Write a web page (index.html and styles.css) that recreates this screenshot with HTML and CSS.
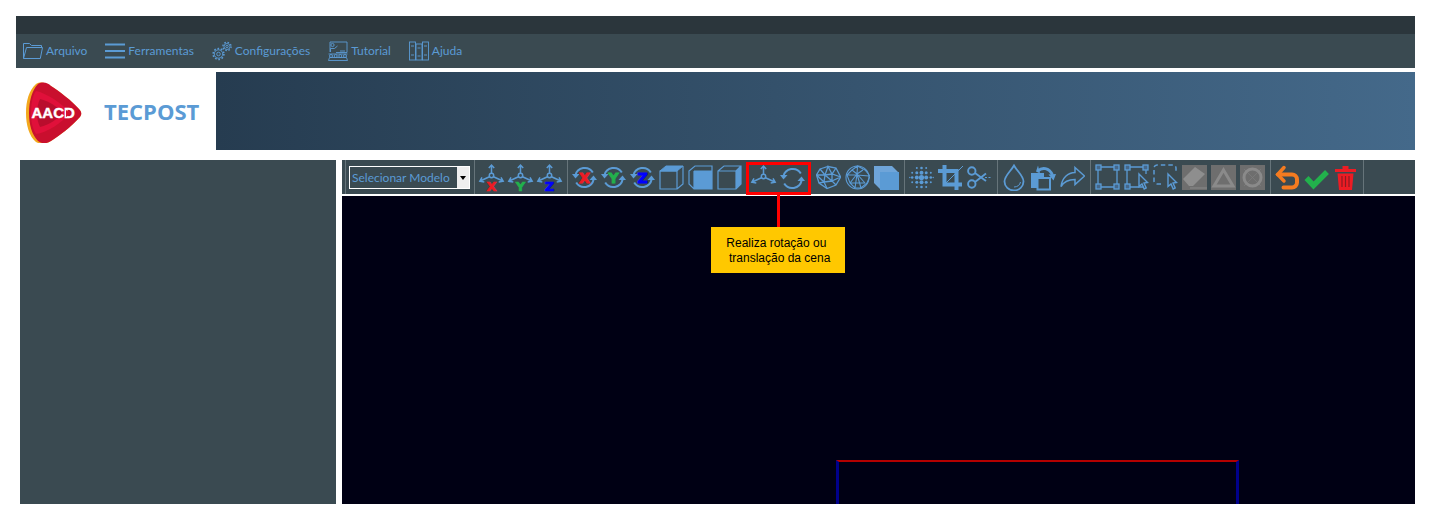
FILE: index.html
```html
<!DOCTYPE html>
<html lang="pt-BR">
<head>
    <meta charset="UTF-8">
    <meta name="viewport" content="width=device-width, initial-scale=1.0">
    <title>TecPost</title>
    <link rel="stylesheet" href="styles.css">
</head>
<body>
    <svg class="sprite" aria-hidden="true">
        <defs>
            <g id="axes" fill="none" stroke="currentColor" stroke-width="1.500">
                <circle cx="12.500" cy="11.500" r="2.200"/>
                <path d="M12.500 9.300V1M9.800 4l2.700-3 2.700 3"/>
                <path d="M10.500 12.700L1.200 17M3 13.300L.8 17.300l4.500.8"/>
                <path d="M14.500 12.700l9.300 4.300M22 13.300l2.200 4-4.500.8"/>
            </g>
            <g id="spin" fill="none" stroke="currentColor" stroke-width="2">
                <path d="M3.400 10.500A9.500 9.500 0 0 1 20.800 7.500"/>
                <path d="M21.600 14.500A9.500 9.500 0 0 1 4.200 17.500"/>
                <path d="M0 9l3.500 4.500L7.500 9z" fill="currentColor" stroke="none"/>
                <path d="M17.500 15l4-4.500 3.500 4.500z" fill="currentColor" stroke="none"/>
            </g>
            <symbol id="i-folder" viewBox="0 0 20 20">
                <path d="M.5 17.500V2.500h6l2 2h10v2M.5 17.500h16.800l2.200-11H3.500l-3 11z" fill="none" stroke="currentColor"/>
            </symbol>
            <symbol id="i-menu" viewBox="0 0 20 20">
                <path d="M0 3.500h20M0 10h20M0 16.500h20" fill="none" stroke="currentColor" stroke-width="2"/>
            </symbol>
            <symbol id="i-gears" viewBox="0 0 20 20">
                <g fill="none" stroke="currentColor">
                    <circle cx="6.500" cy="13" r="1.800" stroke-width=".9"/>
                    <circle cx="6.500" cy="13" r="4.200" stroke-width=".9"/>
                    <circle cx="6.500" cy="13" r="5.400" stroke-width="1.600" stroke-dasharray="1.700 1.690"/>
                    <circle cx="15" cy="5.500" r="1.200" stroke-width=".9"/>
                    <circle cx="15" cy="5.500" r="3" stroke-width=".9"/>
                    <circle cx="15" cy="5.500" r="4.100" stroke-width="1.400" stroke-dasharray="1.600 1.620"/>
                </g>
            </symbol>
            <symbol id="i-class" viewBox="0 0 20 20">
                <g fill="none" stroke="currentColor" stroke-width=".9">
                    <path d="M2 11V1h17v10.500H8"/>
                    <circle cx="4.500" cy="4" r="1.600"/>
                    <path d="M2.500 11V7.500h4l3-2.500M12 10h5"/>
                    <circle cx="3" cy="15" r="1.500"/><circle cx="7.700" cy="15" r="1.500"/>
                    <circle cx="12.300" cy="15" r="1.500"/><circle cx="17" cy="15" r="1.500"/>
                    <path d="M.5 19.500l1-3h17l1 3zM.5 13h19"/>
                </g>
            </symbol>
            <symbol id="i-books" viewBox="0 0 20 20">
                <g fill="none" stroke="currentColor" stroke-width=".9">
                    <rect x=".500" y="1" width="6" height="18"/>
                    <rect x="7" y="3" width="6" height="16"/>
                    <rect x="13.500" y="1" width="6" height="18"/>
                    <path d="M2 5h3M2 14h3M8.500 7h3M8.500 15h3M15 5h3M15 14h3"/>
                </g>
            </symbol>
            <symbol id="i-cube-top" viewBox="0 0 25 27">
                <path d="M1 7l6-5h17l-6 5z" fill="currentColor" stroke="currentColor"/>
                <path d="M1 7h17v18H1zM18 25l6-5V2" fill="none" stroke="currentColor" stroke-width="1.200"/>
            </symbol>
            <symbol id="i-cube-front" viewBox="0 0 25 27">
                <rect x="6" y="7" width="18" height="18" fill="currentColor"/>
                <path d="M1 7l6-5h17v23H6l-5-5zM6 7v18M6 7h18" fill="none" stroke="currentColor" stroke-width="1.200"/>
            </symbol>
            <symbol id="i-cube-side" viewBox="0 0 25 27">
                <path d="M19 7l5-5v18l-5 5z" fill="currentColor"/>
                <path d="M1 7l6-5h17v18l-5 5H1zM1 7h18v18M19 7l5-5" fill="none" stroke="currentColor" stroke-width="1.200"/>
            </symbol>
            <symbol id="i-wire" viewBox="0 0 25 27">
                <g fill="none" stroke="currentColor" stroke-width="1.300">
                    <path d="M4 5l8-2.500L20 4l4.700 9-4.700 8-9 3.500L3 19 .5 11z"/>
                    <path d="M4 5l5 6 3-8.500L16 10l4-6M.5 11L9 11l7-1 8.700 3L16 17l4 4M9 11l-1 7 3 6.500M8 18l8-1M3 19l5-1M.5 11L8 18M9 11l7 6M16 10v7"/>
                </g>
            </symbol>
            <symbol id="i-ball" viewBox="0 0 25 27">
                <g fill="none" stroke="currentColor" stroke-width="1.100">
                    <circle cx="12.500" cy="13.500" r="11.500"/>
                    <path d="M12.500 2L7 6l-5 5 3 8 5 5h6l6-5 3-7-5-6zM7 6l5 4 6-4M12 10l-7 9M12 10l8 9M2 11h10l12 1M5 19h15M10 24l2-14 4 14M12.500 2l-.500 8"/>
                </g>
            </symbol>
            <symbol id="i-solid" viewBox="0 0 25 27">
                <path d="M0 2h18l7 7v17H7l-7-7z" fill="#6fa5d9"/>
                <path d="M6 8h19v18H6z" fill="currentColor"/>
            </symbol>
            <symbol id="i-dots" viewBox="0 0 25 27" fill="currentColor">
                <circle cx="12.500" cy="13.500" r="2.600"/>
                <circle cx="7.800" cy="13.500" r="2"/><circle cx="17.200" cy="13.500" r="2"/>
                <circle cx="12.500" cy="8.800" r="2"/><circle cx="12.500" cy="18.200" r="2"/>
                <circle cx="7.800" cy="8.800" r="1.500"/><circle cx="17.200" cy="8.800" r="1.500"/>
                <circle cx="7.800" cy="18.200" r="1.500"/><circle cx="17.200" cy="18.200" r="1.500"/>
                <circle cx="3.200" cy="13.500" r="1.300"/><circle cx="21.800" cy="13.500" r="1.300"/>
                <circle cx="12.500" cy="4" r="1.300"/><circle cx="12.500" cy="23" r="1.300"/>
                <circle cx="7.800" cy="4" r="1"/><circle cx="17.200" cy="4" r="1"/>
                <circle cx="7.800" cy="23" r="1"/><circle cx="17.200" cy="23" r="1"/>
                <circle cx="3.200" cy="8.800" r="1"/><circle cx="21.800" cy="8.800" r="1"/>
                <circle cx="3.200" cy="18.200" r="1"/><circle cx="21.800" cy="18.200" r="1"/>
                <circle cx=".8" cy="13.500" r=".7"/><circle cx="24.200" cy="13.500" r=".7"/>
            </symbol>
            <symbol id="i-crop" viewBox="0 0 25 27">
                <path d="M6.500 1v19.500H24M0 7h18.500v19" fill="none" stroke="currentColor" stroke-width="4"/>
                <path d="M8 19L25 2" stroke="currentColor" stroke-width="1"/>
            </symbol>
            <symbol id="i-scissors" viewBox="0 0 25 27">
                <g fill="none" stroke="currentColor" stroke-width="1.900">
                    <circle cx="4.800" cy="7" r="3.700"/>
                    <circle cx="4.800" cy="20" r="3.700"/>
                    <path d="M8 9l11 8M8 18l11-8.500"/>
                </g>
                <path d="M18 13.500h7" stroke="currentColor" stroke-width="1" stroke-dasharray="2 1.500"/>
            </symbol>
            <symbol id="i-drop" viewBox="0 0 25 27">
                <path d="M12 1.500c3 5.500 9.500 10.500 9.500 16a9.500 9 0 0 1-19 0C2.500 12 9 7 12 1.500z" fill="none" stroke="currentColor" stroke-width="1.800"/>
                <path d="M12 23c3.500 0 6-2 6.500-5" fill="none" stroke="currentColor"/>
            </symbol>
            <symbol id="i-copy-turn" viewBox="0 0 25 27">
                <rect y="9" width="13" height="15" fill="currentColor"/>
                <rect x="6.500" y="14" width="12.500" height="11.500" fill="#3a4a51" stroke="currentColor" stroke-width="2"/>
                <path d="M7 7C11 3 18 3.500 21.500 11" fill="none" stroke="currentColor" stroke-width="2.800"/>
                <path d="M17.500 10.500l7.500-.5-2.500 6.500zM7 1.500l2 8-4-2z" fill="currentColor"/>
            </symbol>
            <symbol id="i-share" viewBox="0 0 25 27">
                <path d="M15 3.500l9.500 8.500-9.500 8.500v-5c-6 0-11 2-14 7C2 14 8 8.500 15 8.500z" fill="none" stroke="currentColor" stroke-width="1.500"/>
            </symbol>
            <g id="frame" fill="none" stroke="currentColor" stroke-width="1.300">
                <path d="M4 3h17M3 4v18M4 23h17"/>
                <rect x="1" y="1" width="5" height="5" fill="#46688a"/>
                <rect x="19" y="1" width="5" height="5" fill="#46688a"/>
                <rect x="1" y="20" width="5" height="5" fill="#46688a"/>
            </g>
            <path id="cursor" d="M15 10l8.500 8.500-3.500.500 2.200 5-2 1-2.200-5-3 2.500z" fill="#3a4a51" stroke="currentColor" stroke-width="1.400"/>
            <symbol id="i-frame" viewBox="0 0 25 27">
                <path d="M22 4v18" stroke="currentColor" stroke-width="1.300"/>
                <use href="#frame"/>
                <rect x="19" y="20" width="5" height="5" fill="#46688a" stroke="currentColor" stroke-width="1.300"/>
            </symbol>
            <symbol id="i-frame-pick" viewBox="0 0 25 27">
                <path d="M22 4v6" stroke="currentColor" stroke-width="1.300"/>
                <use href="#frame"/>
                <use href="#cursor"/>
            </symbol>
            <symbol id="i-dash-pick" viewBox="0 0 25 27">
                <path d="M8 20H4a3 3 0 0 1-3-3V4a3 3 0 0 1 3-3h16a3 3 0 0 1 3 3v5" fill="none" stroke="currentColor" stroke-width="1.500" stroke-dasharray="4.500 3"/>
                <use href="#cursor"/>
            </symbol>
            <symbol id="i-eraser" viewBox="0 0 25 27">
                <rect y="1" width="25" height="25" fill="#6e6e6e"/>
                <path d="M1 15L13 3l10 7-12 12H7z" fill="#8e8e8e"/>
                <path d="M8 24h17" stroke="#828282" stroke-width="1.500"/>
            </symbol>
            <symbol id="i-tri" viewBox="0 0 25 27">
                <rect y="1" width="25" height="25" fill="#6e6e6e"/>
                <path d="M12.500 6L22 22H3z" fill="none" stroke="#8a8a8a" stroke-width="3"/>
            </symbol>
            <symbol id="i-ring" viewBox="0 0 25 27">
                <rect y="1" width="25" height="25" fill="#6e6e6e"/>
                <path d="M4 5l17 17M21 5L4 22" stroke="#7c7c7c" stroke-width=".8"/>
                <circle cx="12.500" cy="13.500" r="8.500" fill="none" stroke="#8a8a8a" stroke-width="3"/>
            </symbol>
            <symbol id="i-undo" viewBox="0 0 25 27">
                <path d="M3 10.500h14a5 5 0 0 1 5 5v3a5 5 0 0 1-5 5H8.500" fill="none" stroke="#f47b20" stroke-width="4" stroke-linecap="round"/>
                <path d="M9 3.500L2.700 10.500 9 17" fill="none" stroke="#f47b20" stroke-width="3.500" stroke-linecap="round"/>
            </symbol>
            <symbol id="i-check" viewBox="0 0 25 27">
                <path d="M2.500 14l7 7.500L23 8" fill="none" stroke="#22b14c" stroke-width="5.500"/>
            </symbol>
            <symbol id="i-trash" viewBox="0 0 25 27" fill="#ed1c24">
                <path d="M2 5h7.500V2h6v3H23v3H2z"/>
                <path d="M4.500 9.500h16L19 26H6z"/>
                <path d="M9 12v11M12.500 12v11M16 12v11" stroke="#8c1a22" stroke-width="1.200"/>
            </symbol>
            <path id="logo-shape" d="M10 3c5-3 10-1 15 2 9 6 20 14 28 23 3 3 3 6 0 9-8 9-19 17-28 23-5 3-10 4-15 1C3 55 0 44 0 32S3 9 10 3z"/>
        </defs>
    </svg>

    <div class="top-strip"></div>

    <nav class="menu">
        <a class="menu-item"><svg class="menu-icon"><use href="#i-folder"/></svg>Arquivo</a>
        <a class="menu-item"><svg class="menu-icon"><use href="#i-menu"/></svg>Ferramentas</a>
        <a class="menu-item"><svg class="menu-icon"><use href="#i-gears"/></svg>Configurações</a>
        <a class="menu-item"><svg class="menu-icon"><use href="#i-class"/></svg>Tutorial</a>
        <a class="menu-item"><svg class="menu-icon"><use href="#i-books"/></svg>Ajuda</a>
    </nav>

    <header class="banner">
        <div class="brand">
            <svg class="logo" viewBox="0 0 56 62">
                <use href="#logo-shape" fill="#f2a81d"/>
                <g transform="translate(2 0)">
                    <path d="M10 3c5-3 10-1 13 2 9 6 20 14 28 23 3 3 3 6 0 9-8 9-19 17-28 23-5 3-9 3-13 0C4 54 1 44 1 32S4 9 10 3z" fill="#c90f2e"/>
                    <path d="M8 10c10 2 26 12 34 22-8 10-24 20-34 21-4-6-5-14-5-21S4 15 8 10z" fill="#e0103a"/>
                    <path d="M12 18c9 2 18 8 22 14-4 6-13 12-22 14-2-4-3-9-3-14s1-10 3-14z" fill="#b90d2d"/>
                    <text class="logo-text" x="3.500" y="37">AACD</text>
                    <path d="M38 29l5 3.500-5 3.500z" fill="#d5102f"/>
                </g>
            </svg>
            <span class="brand-name">TECPOST</span>
        </div>
        <div class="banner-fill"></div>
    </header>

    <main class="workspace">
        <aside class="side-panel"></aside>
        <section class="viewer">
            <div class="toolbar">
                <div class="tool-group tool-group-first">
                    <div class="model-select">
                        <span class="model-label">Selecionar Modelo</span>
                        <span class="model-arrow"></span>
                    </div>
                </div>
                <div class="tool-group">
                    <svg class="tool" viewBox="0 0 25 27"><use href="#axes"/><text class="axis-letter red" x="12.500" y="26.500">X</text></svg>
                    <svg class="tool" viewBox="0 0 25 27"><use href="#axes"/><text class="axis-letter green" x="12.500" y="26.500">Y</text></svg>
                    <svg class="tool" viewBox="0 0 25 27"><use href="#axes"/><text class="axis-letter blue" x="12.500" y="26.500">Z</text></svg>
                </div>
                <div class="tool-group">
                    <svg class="tool" viewBox="0 -1 25 27"><use href="#spin"/><text class="spin-letter red" x="12.500" y="18">X</text></svg>
                    <svg class="tool" viewBox="0 -1 25 27"><use href="#spin"/><text class="spin-letter green" x="12.500" y="18">Y</text></svg>
                    <svg class="tool" viewBox="0 -1 25 27"><use href="#spin"/><text class="spin-letter blue" x="12.500" y="18">Z</text></svg>
                    <svg class="tool"><use href="#i-cube-top"/></svg>
                    <svg class="tool"><use href="#i-cube-front"/></svg>
                    <svg class="tool"><use href="#i-cube-side"/></svg>
                    <div class="highlight">
                        <svg class="tool" viewBox="0 0 25 27"><use href="#axes"/></svg>
                        <svg class="tool" viewBox="0 -1 25 27"><use href="#spin"/></svg>
                        <div class="callout">Realiza rotação ou&nbsp;<br>&nbsp;translação da cena</div>
                    </div>
                    <svg class="tool"><use href="#i-wire"/></svg>
                    <svg class="tool"><use href="#i-ball"/></svg>
                    <svg class="tool"><use href="#i-solid"/></svg>
                </div>
                <div class="tool-group">
                    <svg class="tool"><use href="#i-dots"/></svg>
                    <svg class="tool"><use href="#i-crop"/></svg>
                    <svg class="tool"><use href="#i-scissors"/></svg>
                </div>
                <div class="tool-group">
                    <svg class="tool"><use href="#i-drop"/></svg>
                    <svg class="tool"><use href="#i-copy-turn"/></svg>
                    <svg class="tool"><use href="#i-share"/></svg>
                </div>
                <div class="tool-group">
                    <svg class="tool"><use href="#i-frame"/></svg>
                    <svg class="tool"><use href="#i-frame-pick"/></svg>
                    <svg class="tool"><use href="#i-dash-pick"/></svg>
                    <svg class="tool"><use href="#i-eraser"/></svg>
                    <svg class="tool"><use href="#i-tri"/></svg>
                    <svg class="tool"><use href="#i-ring"/></svg>
                </div>
                <div class="tool-group">
                    <svg class="tool"><use href="#i-undo"/></svg>
                    <svg class="tool"><use href="#i-check"/></svg>
                    <svg class="tool"><use href="#i-trash"/></svg>
                </div>
                <div class="tool-end"></div>
            </div>
            <div class="scene">
                <div class="model-box"></div>
            </div>
        </section>
    </main>
</body>
</html>
```

FILE: styles.css
```css
* {
    box-sizing: border-box;
}

body {
    margin: 16px 15px 0 16px;
    background-color: #fff;
    font-family: 'Lato', sans-serif;
    color: #5b9bd5;
}

.sprite {
    display: none;
}

.top-strip {
    height: 18px;
    background-color: #2b363c;
}

.menu {
    display: flex;
    align-items: center;
    gap: 18px;
    height: 34px;
    padding: 0 0 1px 7px;
    background-color: #3a4a51;
}

.menu-item {
    display: flex;
    align-items: center;
    gap: 3px;
    font-size: 12px;
}

.menu-icon {
    width: 20px;
    height: 20px;
}

.banner {
    display: flex;
    height: 78px;
    margin-top: 4px;
}

.brand {
    display: flex;
    align-items: center;
    width: 200px;
    padding-left: 10px;
}

.logo {
    width: 56px;
    height: 62px;
    margin-top: 1px;
}

.logo-text {
    font-family: 'Liberation Sans', sans-serif;
    font-size: 15px;
    font-weight: bold;
    fill: #fff;
    stroke: #fff;
    stroke-width: .4px;
}

.brand-name {
    margin-left: 22px;
    font-family: 'Open Sans', sans-serif;
    font-size: 22px;
    font-weight: 700;
}

.banner-fill {
    flex: 1;
    background: linear-gradient(to right, #263c50, #44698a);
}

.workspace {
    display: flex;
    gap: 6px;
    height: 344px;
    margin-top: 10px;
    padding-left: 4px;
}

.side-panel {
    width: 316px;
    background-color: #3a4a51;
}

.viewer {
    flex: 1;
    display: flex;
    flex-direction: column;
}

.toolbar {
    display: flex;
    flex: none;
    height: 34px;
    padding-left: 3px;
    background-color: #3a4a51;
}

.tool-group {
    display: flex;
    align-items: center;
    gap: 4px;
    padding: 0 5px 0 4px;
    border-left: 1px solid #66747a;
}

.tool-group-first {
    padding: 0 4px 0 3px;
}

.tool-end {
    border-left: 1px solid #66747a;
}

.tool {
    flex: none;
    width: 25px;
    height: 27px;
    overflow: visible;
}

.axis-letter,
.spin-letter {
    font-family: 'DejaVu Sans', sans-serif;
    font-weight: bold;
    text-anchor: middle;
}

.axis-letter {
    font-size: 13px;
    stroke-width: .7px;
}

.spin-letter {
    font-size: 14px;
}

.red {
    fill: #ed1c24;
    stroke: #ed1c24;
}

.green {
    fill: #22b14c;
    stroke: #22b14c;
}

.blue {
    fill: #0000ff;
    stroke: #0000ff;
}

.model-select {
    display: flex;
    width: 121px;
    height: 23px;
    border: 1px solid #fff;
}

.model-label {
    flex: 1;
    padding-left: 2px;
    font-size: 12px;
    line-height: 21px;
}

.model-arrow {
    position: relative;
    width: 12px;
    background-color: #eee;
}

.model-arrow::after {
    content: "";
    position: absolute;
    left: 3px;
    top: 9px;
    border: 3px solid transparent;
    border-top: 4px solid #000;
    border-bottom: 0;
}

.highlight {
    position: relative;
    display: flex;
    gap: 4px;
    align-self: flex-start;
    align-items: center;
    height: 33px;
    margin: 2px 1px 0 0;
    padding: 0 3px 0 2px;
    border: 3px solid #f00;
}

.highlight::after {
    content: "";
    position: absolute;
    left: 28px;
    top: 30px;
    width: 3px;
    height: 32px;
    background-color: #f00;
}

.callout {
    position: absolute;
    left: -38px;
    top: 62px;
    z-index: 1;
    width: 134px;
    height: 46px;
    padding-top: 9px;
    background-color: #ffc800;
    color: #000;
    font-family: 'Liberation Sans', sans-serif;
    font-size: 12px;
    line-height: 15px;
    text-align: center;
}

.scene {
    flex: 1;
    margin-top: 2px;
    padding: 264px 176px 0 494px;
    background-color: #000014;
}

.model-box {
    height: 100%;
    border-top: 2px solid #b30000;
    border-left: 3px solid #00008b;
    border-right: 3px solid #00008b;
}
```
